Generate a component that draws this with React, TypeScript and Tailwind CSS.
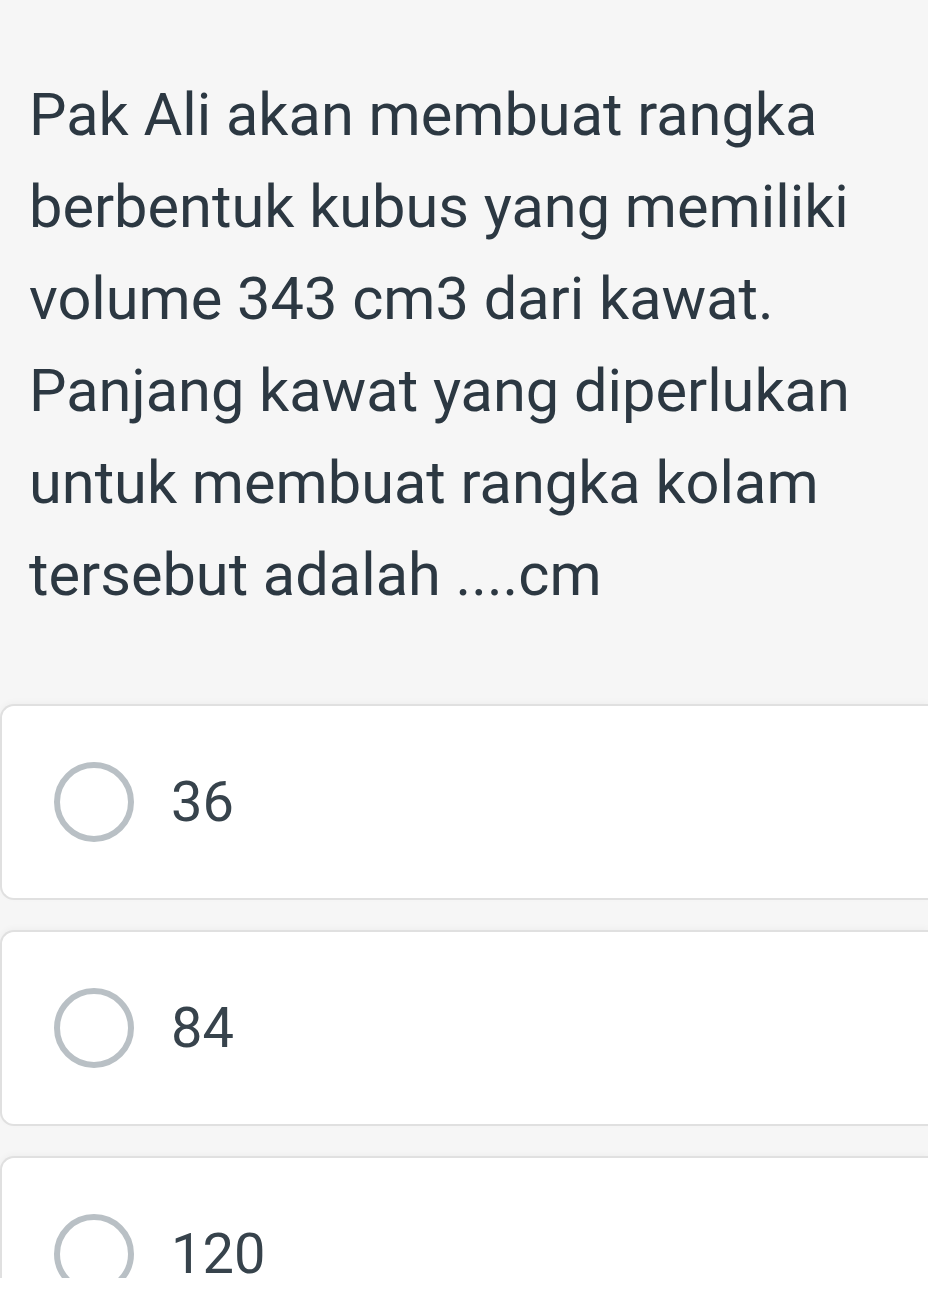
import React from 'react';

const options = ['36', '84', '120'];

const Radio = () => (
  <div className="w-[80px] h-[80px] shrink-0 rounded-full border-[6px] border-[#b9c0c5] bg-white" />
);

export default function App() {
  return (
    <div className="w-full h-[1302px] flex flex-col bg-white" style={{ fontFamily: 'Roboto, "Noto Sans", sans-serif' }}>
      <div className="h-[1278px] overflow-hidden bg-[#f6f6f6]">
        {/* Question */}
        <p className="pt-[69px] pl-[29px] pr-[40px] text-[59.5px] leading-[92px] text-[#2c3842]">
          Pak Ali akan membuat rangka berbentuk kubus yang memiliki volume 343 cm3 dari kawat. Panjang kawat yang diperlukan untuk membuat rangka kolam tersebut adalah ....cm
        </p>

        {/* Options */}
        <div className="mt-[83px] flex flex-col gap-[30px]">
          {options.map((opt) => (
            <div
              key={opt}
              className="h-[196px] shrink-0 flex items-center gap-[37px] pl-[52px] bg-white border-2 border-r-0 border-[#e0e0e0] rounded-l-[14px] shadow-[0_-2px_6px_rgba(0,0,0,0.03)]"
            >
              <Radio />
              <span className="text-[56px] leading-none text-[#37434c]">{opt}</span>
            </div>
          ))}
        </div>
      </div>
      <div className="h-[24px] bg-white" />
    </div>
  );
}
